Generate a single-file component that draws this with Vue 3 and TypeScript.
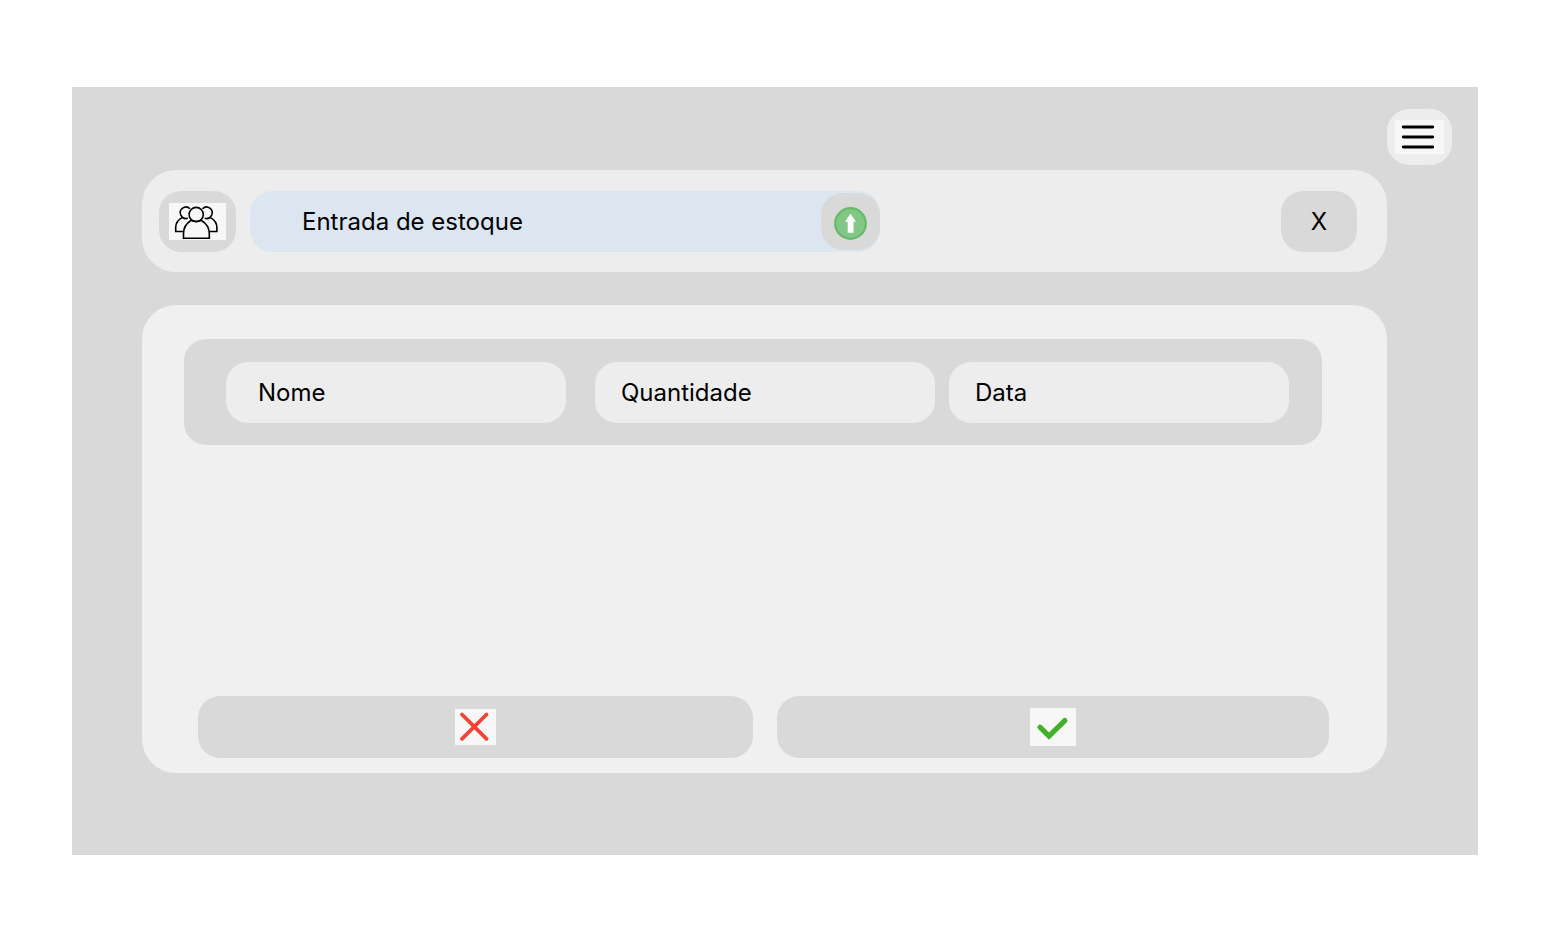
<script setup lang="ts">
import { reactive } from 'vue'

interface Field {
  id: 'nome' | 'quantidade' | 'data'
  label: string
}

const fields: Field[] = [
  { id: 'nome', label: 'Nome' },
  { id: 'quantidade', label: 'Quantidade' },
  { id: 'data', label: 'Data' },
]

const entry = reactive<Record<Field['id'], string>>({ nome: '', quantidade: '', data: '' })

function clearEntry(): void {
  for (const field of fields) entry[field.id] = ''
}
</script>

<template>
  <main class="frame">
    <nav class="topbar" aria-label="Principal">
      <button type="button" class="menu" aria-label="Menu">
        <svg class="tile" width="49" height="34" viewBox="0 0 49 34" aria-hidden="true">
          <path d="M8.3 7h29.4M8.3 17h29.4M8.3 27h29.4" fill="none" stroke="#000" stroke-width="2.9" stroke-linecap="round" />
        </svg>
      </button>
    </nav>

    <div class="content">
      <header class="header">
        <button type="button" class="square" aria-label="Usuários">
          <svg class="tile" width="57" height="37" viewBox="0 0 57 37" aria-hidden="true">
            <g fill="none" stroke="#000" stroke-width="1.6">
              <circle cx="27.2" cy="11.5" r="7.1" />
              <path d="M14.5 35.2V30.5C14.500 25 17 20.500 22.200 17.200C25 18.900 29.500 18.900 32.200 17.200C37.500 20.500 40.300 25 40.300 30.500V35.200Z" />
              <path d="M21 5.700A5.700 5.700 0 1 0 18.800 15.200M13 14.600C8.800 17 6.700 20.500 6.700 24.500V28.500H14.500" />
              <path d="M33.500 5.700A5.700 5.700 0 1 1 35.700 15.200M41.500 14.600C45.700 17 47.900 20.500 47.900 24.500V28.500H40.300" />
            </g>
          </svg>
        </button>
        <div class="title-bar">
          <h1 class="title">Entrada de estoque</h1>
          <button type="button" class="upload" aria-label="Registrar entrada">
            <svg width="59" height="57" viewBox="0 0 59 57" aria-hidden="true">
              <circle cx="29.5" cy="30.500" r="15.300" fill="#82c785" stroke="#66bb6a" stroke-width="2.200" />
              <path d="M29.500 20.800L35 28.800H32.500V39.700H26.700V28.800H24Z" fill="#fff" />
            </svg>
          </button>
        </div>
        <button type="button" class="square close" aria-label="Fechar">X</button>
      </header>

      <form class="panel" @submit.prevent>
        <div class="fields">
          <input
            v-for="field in fields"
            :key="field.id"
            v-model="entry[field.id]"
            :class="['field', field.id]"
            type="text"
            :name="field.id"
            :placeholder="field.label"
            :aria-label="field.label"
          />
        </div>
        <div class="actions">
          <button type="button" class="action" aria-label="Cancelar" @click="clearEntry">
            <svg class="tile" width="41" height="36" viewBox="0 0 41 36" aria-hidden="true">
              <path d="M7 5.500L31.500 29.800M31.500 5.500L7 29.800" fill="none" stroke="#f44336" stroke-width="3.800" stroke-linecap="round" />
            </svg>
          </button>
          <button type="submit" class="action" aria-label="Confirmar">
            <svg class="tile" width="46" height="38" viewBox="0 0 46 38" aria-hidden="true">
              <path d="M10 19.200L19 28L34.800 12.600" fill="none" stroke="#43b02a" stroke-width="5.200" stroke-linecap="round" />
            </svg>
          </button>
        </div>
      </form>
    </div>
  </main>
</template>

<style>
body {
  margin: 0;
  background: #fff;
}

#app {
  padding: 87px 72px 88px;
}
</style>

<style scoped>
.frame {
  box-sizing: border-box;
  padding: 22px 0 82px;
  background: #d9d9d9;
  color: #000;
  font-family: Inter, "Liberation Sans", sans-serif;
  font-size: 24px;
  line-height: 30px;
}

button,
input {
  box-sizing: border-box;
  margin: 0;
  padding: 0;
  border: 0;
  color: inherit;
  font: inherit;
}

button {
  display: flex;
  align-items: center;
  justify-content: center;
  background: #d9d9d9;
  cursor: pointer;
}

svg {
  display: block;
}

.tile {
  background: #f7f7f7;
}

.topbar {
  display: flex;
  justify-content: flex-end;
  padding-right: 26px;
}

.menu {
  width: 65px;
  height: 56px;
  border-radius: 22px;
  background: #ededed;
}

.content {
  display: flex;
  flex-direction: column;
  gap: 33px;
  margin: 5px 91px 0 70px;
}

.header {
  display: flex;
  align-items: center;
  gap: 14px;
  padding: 21px 30px 20px 17px;
  border-radius: 34px;
  background: #ededed;
}

.square {
  flex: none;
  width: 77px;
  height: 61px;
  border-radius: 22px;
}

.close {
  width: 76px;
  margin-left: auto;
}

.title-bar {
  display: flex;
  flex: 0 1 630px;
  align-items: center;
  justify-content: space-between;
  height: 61px;
  border-radius: 22px;
  background: #dce6f0;
}

.title {
  margin: 0;
  padding-left: 52px;
  font-size: 24px;
  font-weight: 400;
}

.upload {
  flex: none;
  height: 57px;
  border-radius: 22px;
}

.panel {
  display: flex;
  flex-direction: column;
  justify-content: space-between;
  gap: 24px;
  box-sizing: border-box;
  min-height: 468px;
  padding: 34px 58px 15px 42px;
  border-radius: 34px;
  background: #f0f0f0;
}

.fields {
  display: flex;
  gap: 14px;
  margin-right: 7px;
  padding: 23px 33px 22px 42px;
  border-radius: 22px;
  background: #d9d9d9;
}

.field {
  flex: 1 1 340px;
  min-width: 0;
  height: 61px;
  padding: 0 26px;
  border-radius: 22px;
  background: #ededed;
}

.nome {
  margin-right: 15px;
  padding-left: 32px;
}

.field::placeholder {
  color: #000;
  opacity: 1;
}

.actions {
  display: grid;
  grid-template-columns: 555fr 552fr;
  gap: 24px;
  margin-left: 14px;
}

.action {
  height: 62px;
  border-radius: 22px;
}
</style>
